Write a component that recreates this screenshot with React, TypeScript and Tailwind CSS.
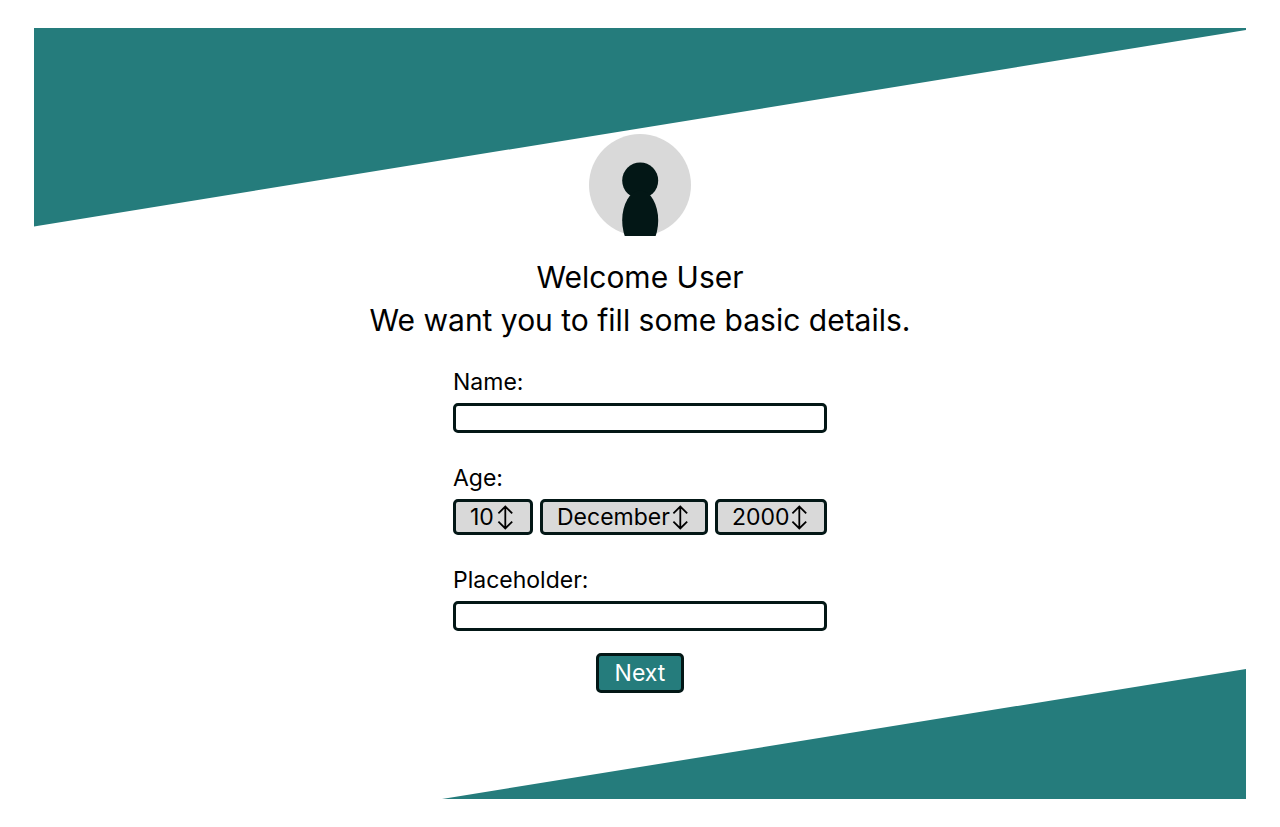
import { useId } from "react";
import type { ReactNode } from "react";

function Backdrop() {
  return (
    <svg
      className="pointer-events-none absolute inset-0 h-full w-full"
      viewBox="0 0 1212 771"
      preserveAspectRatio="none"
      aria-hidden="true"
    >
      <polygon points="0,0 1212,0 1212,2 0,198.5" fill="#257c7c" />
      <polygon points="408,771 1212,641 1212,771" fill="#257c7c" />
    </svg>
  );
}

function Avatar() {
  return (
    <svg className="size-[102px]" viewBox="0 0 102 102" aria-hidden="true">
      <circle cx="51" cy="51" r="51" fill="#d9d9d9" />
      <circle cx="51.2" cy="46.5" r="18" fill="#031716" />
      <ellipse cx="51.2" cy="86.5" rx="18" ry="30" fill="#031716" />
    </svg>
  );
}

function UpDownArrow() {
  return (
    <svg
      className="pointer-events-none absolute top-1/2 right-5 h-[26px] w-4 -translate-y-1/2"
      viewBox="0 0 16 26"
      fill="none"
      stroke="#000"
      strokeWidth="1.8"
      aria-hidden="true"
    >
      <path d="M8.3 2.5V24.5M1.4 9.4L8.3 2.5L15.2 9.4M1.4 17.6L8.3 24.5L15.2 17.6" />
    </svg>
  );
}

function TextField({ label }: { label: string }) {
  const id = useId();
  return (
    <div className="flex flex-col gap-[7px]">
      <label htmlFor={id} className="leading-7">
        {label}
      </label>
      <input
        id={id}
        type="text"
        className="h-[30px] w-full rounded-[5px] border-3 border-[#031716] bg-white px-2 text-base"
      />
    </div>
  );
}

function Picker({
  label,
  value,
  options,
  width,
}: {
  label: string;
  value: string;
  options: string[];
  width: string;
}) {
  return (
    <div className={`relative ${width}`}>
      <select
        aria-label={label}
        defaultValue={value}
        className="block h-9 w-full appearance-none rounded-[5px] border-3 border-[#031716] bg-[#d9d9d9] pl-[14px] leading-7"
      >
        {options.map((option) => (
          <option key={option}>{option}</option>
        ))}
      </select>
      <UpDownArrow />
    </div>
  );
}

function FieldGroup({ label, children }: { label: string; children: ReactNode }) {
  const id = useId();
  return (
    <div role="group" aria-labelledby={id} className="flex flex-col gap-[7px]">
      <span id={id} className="leading-7">
        {label}
      </span>
      <div className="flex gap-[7px]">{children}</div>
    </div>
  );
}

const days = Array.from({ length: 31 }, (_, i) => String(i + 1));
const months = [
  "January",
  "February",
  "March",
  "April",
  "May",
  "June",
  "July",
  "August",
  "September",
  "October",
  "November",
  "December",
];
const years = Array.from({ length: 100 }, (_, i) => String(2024 - i));

export default function App() {
  return (
    <div className="flex min-h-screen bg-white px-[34px] py-7 font-['Inter',sans-serif] text-black">
      <main className="relative flex flex-1 flex-col items-center pt-[106px] pb-10">
        <Backdrop />
        <div className="relative flex flex-col items-center">
          <Avatar />
          <h1 className="mt-5 text-center text-[30px] leading-[43px]">
            Welcome User
            <br />
            We want you to fill some basic details.
          </h1>
          <form
            className="mt-[26px] flex w-[374px] flex-col text-[23px]"
            onSubmit={(event) => event.preventDefault()}
          >
            <div className="flex flex-col gap-[31px]">
              <TextField label="Name:" />
              <FieldGroup label="Age:">
                <Picker label="Day" value="10" options={days} width="w-20" />
                <Picker label="Month" value="December" options={months} width="w-[168px]" />
                <Picker label="Year" value="2000" options={years} width="w-28" />
              </FieldGroup>
              <TextField label="Placeholder:" />
            </div>
            <button
              type="submit"
              className="mt-[22px] h-10 w-[88px] self-center rounded-[5px] border-3 border-[#031716] bg-[#257c7c] leading-7 text-white"
            >
              Next
            </button>
          </form>
        </div>
      </main>
    </div>
  );
}
